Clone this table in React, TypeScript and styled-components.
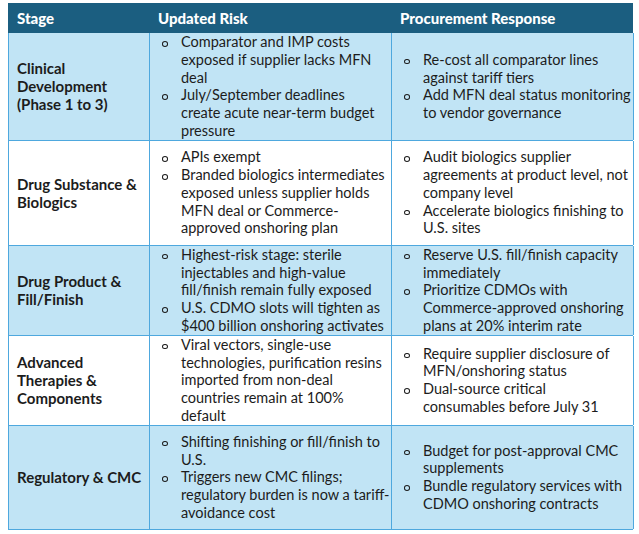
import React from "react";
import styled, { createGlobalStyle } from "styled-components";

const Global = createGlobalStyle`
  body {
    margin: 0;
    background: #ffffff;
  }
`;

const Page = styled.div`
  padding: 3px 0 0 8px;
  font-family: Lato, "Liberation Sans", sans-serif;
  color: #1c1c1c;
`;

const Table = styled.div`
  width: 625px;
  display: flex;
  flex-direction: column;
`;

const HeaderRow = styled.div`
  display: grid;
  grid-template-columns: 141px 242px 242px;
  height: 30px;
  background: #1b5e80;
  color: #ffffff;
  font-weight: 900;
  font-size: 15px;
`;

const HeadCell = styled.div`
  display: flex;
  align-items: center;
  padding-left: 9px;
`;

const Row = styled.div<{ $shaded: boolean; $height: number }>`
  display: grid;
  grid-template-columns: 141px 242px 242px;
  min-height: ${(p) => p.$height}px;
  box-sizing: border-box;
  background: ${(p) => (p.$shaded ? "#c1e4f5" : "#ffffff")};
  border-left: 1px solid #4ea8de;
  border-bottom: 1px solid #4ea8de;
`;

const StageCell = styled.div`
  display: flex;
  align-items: center;
  padding: 0 6px 0 8px;
  border-right: 1px solid #4ea8de;
  font-weight: 700;
  font-size: 15px;
  line-height: 18px;
  white-space: pre;
`;

const ListCell = styled.div`
  display: flex;
  align-items: center;
  border-right: 1px solid #4ea8de;
`;

const List = styled.ul`
  list-style: none;
  margin: 0;
  padding: 0 2px 0 11px;
  font-size: 14.5px;
  line-height: 17.8px;
`;

const Item = styled.li`
  display: flex;
  white-space: pre;
`;

const Bullet = styled.span`
  flex: 0 0 20px;
  height: 17.8px;
  position: relative;

  &::before {
    content: "";
    position: absolute;
    left: 1px;
    top: 8px;
    width: 4px;
    height: 3.5px;
    border: 1.2px solid #1c1c1c;
    border-radius: 50%;
  }
`;

type Entry = {
  stage: string;
  risk: string[];
  response: string[];
  height: number;
};

const rows: Entry[] = [
  {
    stage: "Clinical\nDevelopment\n(Phase 1 to 3)",
    risk: [
      "Comparator and IMP costs\nexposed if supplier lacks MFN\ndeal",
      "July/September deadlines\ncreate acute near-term budget\npressure",
    ],
    response: [
      "Re-cost all comparator lines\nagainst tariff tiers",
      "Add MFN deal status monitoring\nto vendor governance",
    ],
    height: 107,
  },
  {
    stage: "Drug Substance &\nBiologics",
    risk: [
      "APIs exempt",
      "Branded biologics intermediates\nexposed unless supplier holds\nMFN deal or Commerce-\napproved onshoring plan",
    ],
    response: [
      "Audit biologics supplier\nagreements at product level, not\ncompany level",
      "Accelerate biologics finishing to\nU.S. sites",
    ],
    height: 105,
  },
  {
    stage: "Drug Product &\nFill/Finish",
    risk: [
      "Highest-risk stage: sterile\ninjectables and high-value\nfill/finish remain fully exposed",
      "U.S. CDMO slots will tighten as\n$400 billion onshoring activates",
    ],
    response: [
      "Reserve U.S. fill/finish capacity\nimmediately",
      "Prioritize CDMOs with\nCommerce-approved onshoring\nplans at 20% interim rate",
    ],
    height: 90,
  },
  {
    stage: "Advanced\nTherapies &\nComponents",
    risk: [
      "Viral vectors, single-use\ntechnologies, purification resins\nimported from non-deal\ncountries remain at 100%\ndefault",
    ],
    response: [
      "Require supplier disclosure of\nMFN/onshoring status",
      "Dual-source critical\nconsumables before July 31",
    ],
    height: 90,
  },
  {
    stage: "Regulatory & CMC",
    risk: [
      "Shifting finishing or fill/finish to\nU.S.",
      "Triggers new CMC filings;\nregulatory burden is now a tariff-\navoidance cost",
    ],
    response: [
      "Budget for post-approval CMC\nsupplements",
      "Bundle regulatory services with\nCDMO onshoring contracts",
    ],
    height: 104,
  },
];

function Bullets({ items }: { items: string[] }) {
  return (
    <ListCell>
      <List>
        {items.map((t) => (
          <Item key={t}>
            <Bullet />
            <span>{t}</span>
          </Item>
        ))}
      </List>
    </ListCell>
  );
}

export default function App() {
  return (
    <Page>
      <Global />
      <Table>
        <HeaderRow>
          <HeadCell>Stage</HeadCell>
          <HeadCell>Updated Risk</HeadCell>
          <HeadCell>Procurement Response</HeadCell>
        </HeaderRow>
        {rows.map((r, i) => (
          <Row key={r.stage} $shaded={i % 2 === 0} $height={r.height}>
            <StageCell>{r.stage}</StageCell>
            <Bullets items={r.risk} />
            <Bullets items={r.response} />
          </Row>
        ))}
      </Table>
    </Page>
  );
}
